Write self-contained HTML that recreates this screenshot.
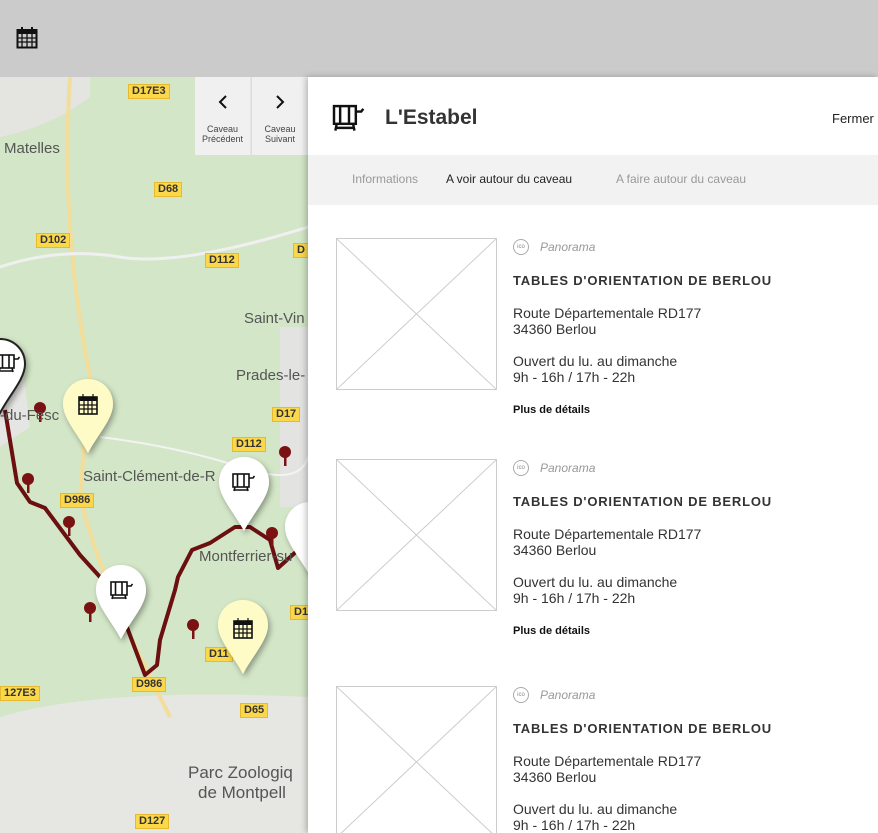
<!DOCTYPE html>
<html><head><meta charset="utf-8"><style>
*{margin:0;padding:0;box-sizing:border-box}
html,body{width:878px;height:833px;overflow:hidden}
body{font-family:"Liberation Sans",sans-serif;position:relative;background:#d5e7c9}
.top{position:absolute;left:0;top:0;width:878px;height:77px;background:#cbcbcb}
.map{position:absolute;left:0;top:77px;width:308px;height:756px;overflow:hidden;background:#d3e6c7}
.lbl{position:absolute;font-size:15px;color:#555}
.rd{position:absolute;background:#fbd84a;border:1px solid #e6b92e;font-size:11px;color:#333;padding:0 3px;line-height:13px;font-weight:bold}
.nav{position:absolute;top:77px;height:78px;width:56px;background:#f0f0f0;text-align:center;font-size:9px;color:#444;line-height:10px}
.panel{position:absolute;left:308px;top:77px;width:570px;height:756px;background:#fff;box-shadow:-2px 0 6px rgba(0,0,0,.25);overflow:hidden}
.tabs{position:absolute;left:0;top:78px;width:570px;height:50px;background:#f2f2f2;font-size:12px}
.tabs span{position:absolute;top:17px;color:#999}
.card{position:absolute;left:28px;width:520px;height:160px}
.img{position:absolute;left:0;top:0;width:161px;height:152px;border:1px solid #ccc}
.txt{position:absolute;left:177px;top:0;color:#333;font-size:14px}
.t{position:absolute;top:35px;font-weight:bold;font-size:13px;letter-spacing:.8px;white-space:nowrap}
</style></head><body>
<div class="top"></div>
<svg style="position:absolute;left:16px;top:26px" width="22" height="23" viewBox="0 0 22 23"><rect x="1.5" y="4" width="19" height="17.5" fill="none" stroke="#111" stroke-width="2"/><rect x="1.5" y="4" width="19" height="4" fill="#111"/><rect x="5" y="1" width="2" height="5" fill="#111"/><rect x="15" y="1" width="2" height="5" fill="#111"/><path d="M6 8v13M11 8v13M16 8v13M2 12h18M2 16h18" stroke="#111" stroke-width="1.3"/></svg>
<div class="map">
<svg width="308" height="756" style="position:absolute;left:0;top:0">
<path d="M0 0h90v20q-40 30-90 40z" fill="#e4e4e0"/>
<path d="M0 270h20l10 80-30 20z" fill="#e5e5e3"/>
<path d="M0 640q100-30 308-20v136H0z" fill="#e6e6e2"/>
<path d="M280 250h28v180h-28z" fill="#e3e3e1"/>
<path d="M70 0 Q60 150 90 300 L80 420 Q100 500 150 600 L170 640" stroke="#f3dd9a" stroke-width="4" fill="none"/>
<path d="M0 190 Q60 170 120 180 T308 150" stroke="#f0f0f0" stroke-width="3" fill="none"/>
<path d="M100 360 Q180 370 240 390 T308 380" stroke="#f3f3f3" stroke-width="2" fill="none"/>
<path d="M5 333 L17 406 L30 425 L45 431 L80 478 L100 500 L125 545 L145 598 L157 588 L160 563 L175 513 L178 500 L192 473 L210 466 L235 450 L250 450 L270 463 L278 491 L298 473 L308 471" stroke="#6b0f10" stroke-width="4" fill="none" stroke-linejoin="round"/>
<g fill="#7a1214"><circle cx="40" cy="331" r="6"/><rect x="39" y="335" width="2.5" height="10"/><circle cx="28" cy="402" r="6"/><rect x="27" y="406" width="2.5" height="10"/><circle cx="69" cy="445" r="6"/><rect x="68" y="449" width="2.5" height="10"/><circle cx="90" cy="531" r="6"/><rect x="89" y="535" width="2.5" height="10"/><circle cx="193" cy="548" r="6"/><rect x="192" y="552" width="2.5" height="10"/><circle cx="285" cy="375" r="6"/><rect x="284" y="379" width="2.5" height="10"/><circle cx="272" cy="456" r="6"/><rect x="271" y="460" width="2.5" height="10"/></g>
</svg>
<div class="lbl" style="left:4px;top:63px">Matelles</div>
<div class="lbl" style="left:244px;top:233px">Saint-Vin</div>
<div class="lbl" style="left:236px;top:290px">Prades-le-</div>
<div class="lbl" style="left:0px;top:330px">-du-Fesc</div>
<div class="lbl" style="left:83px;top:391px">Saint-Clément-de-R</div>
<div class="lbl" style="left:199px;top:471px">Montferrier-su</div>
<div class="lbl" style="left:188px;top:686px;font-size:17px">Parc Zoologiq</div>
<div class="lbl" style="left:198px;top:706px;font-size:17px">de Montpell</div>
<div class="rd" style="left:128px;top:7px">D17E3</div>
<div class="rd" style="left:154px;top:105px">D68</div>
<div class="rd" style="left:36px;top:156px">D102</div>
<div class="rd" style="left:205px;top:176px">D112</div>
<div class="rd" style="left:293px;top:166px">D</div>
<div class="rd" style="left:272px;top:330px">D17</div>
<div class="rd" style="left:232px;top:360px">D112</div>
<div class="rd" style="left:60px;top:416px">D986</div>
<div class="rd" style="left:205px;top:570px">D11</div>
<div class="rd" style="left:132px;top:600px">D986</div>
<div class="rd" style="left:0px;top:609px">127E3</div>
<div class="rd" style="left:240px;top:626px">D65</div>
<div class="rd" style="left:135px;top:737px">D127</div>
<div class="rd" style="left:290px;top:528px">D1</div>
<svg width="308" height="756" style="position:absolute;left:0;top:0">
<defs><filter id="s"><feDropShadow dx="2" dy="3" stdDeviation="3" flood-opacity=".35"/></filter>
<g id="pin"><path d="M0 0C-14 0-25 11-25 25C-25 40-10 55 0 74C10 55 25 40 25 25C25 11 14 0 0 0Z"/></g>
<g id="bar" fill="none" stroke="#111" stroke-width="1.6"><rect x="-10" y="-7" width="16" height="13"/><path d="M-5.5-7v13M1-7v13M-8 6l-1 4M4 6l1 4M-8 9h12M6-3h4l1.5-2"/></g>
<g id="cal"><rect x="-9" y="-8" width="18" height="17" fill="none" stroke="#111" stroke-width="1.6"/><rect x="-9" y="-8" width="18" height="4" fill="#111"/><path d="M-4-4v13M0-4v13M4-4v13M-9 0h18M-9 4h18M-5-11v4M5-11v4" stroke="#111" stroke-width="1.2"/></g></defs>
<g filter="url(#s)" fill="#fff"><use href="#pin" x="0" y="262" stroke="#222" stroke-width="2"/><use href="#pin" x="244" y="380"/><use href="#pin" x="121" y="488"/><use href="#pin" x="310" y="425"/></g>
<g filter="url(#s)" fill="#fefbc6"><use href="#pin" x="88" y="302"/><use href="#pin" x="243" y="523"/></g>
<use href="#bar" x="8" y="285"/><use href="#bar" x="243" y="404"/><use href="#bar" x="121" y="512"/>
<use href="#cal" x="88" y="328"/><use href="#cal" x="243" y="552"/>
</svg>
</div>
<div class="nav" style="left:195px;border-right:1px solid #e5e5e5"><svg width="12" height="16" style="margin-top:17px;margin-bottom:12px" viewBox="0 0 12 16"><path d="M9 2L3 8l6 6" stroke="#111" stroke-width="2" fill="none"/></svg><br>Caveau<br>Précédent</div>
<div class="nav" style="left:252px"><svg width="12" height="16" style="margin-top:17px;margin-bottom:12px" viewBox="0 0 12 16"><path d="M3 2l6 6-6 6" stroke="#111" stroke-width="2" fill="none"/></svg><br>Caveau<br>Suivant</div>
<div class="panel">
<svg style="position:absolute;left:22px;top:25px" width="38" height="30" viewBox="-12 -10 26 22"><g fill="none" stroke="#111" stroke-width="1.8"><rect x="-10" y="-7" width="16" height="13"/><path d="M-5.5-7v13M1-7v13M-8 6l-1 5M4 6l1 5M-8 9h12M6-3h4l1.5-2"/></g></svg>
<div style="position:absolute;left:77px;top:29px;font-size:21px;font-weight:bold;color:#333">L'Estabel</div>
<div style="position:absolute;left:524px;top:34px;font-size:13px;color:#222">Fermer</div>
<div class="tabs"><span style="left:44px">Informations</span><span style="left:138px;color:#222">A voir autour du caveau</span><span style="left:308px">A faire autour du caveau</span></div>
<div class="card" style="top:161px"><svg class="img" viewBox="0 0 161 152" preserveAspectRatio="none"><path d="M0 0L161 152M161 0L0 152" stroke="#ccc"/></svg><div class="txt"><div style="position:absolute;top:1px;left:0;width:16px;height:16px;border:1px solid #aaa;border-radius:50%;font-size:6px;line-height:14px;text-align:center;color:#888">ico</div><div style="position:absolute;left:27px;top:2px;font-size:12px;font-style:italic;color:#999;white-space:nowrap">Panorama</div><div class="t">TABLES D'ORIENTATION DE BERLOU</div><div style="position:absolute;top:67px;line-height:16px;white-space:nowrap">Route Départementale RD177<br>34360 Berlou</div><div style="position:absolute;top:115px;line-height:16px;white-space:nowrap">Ouvert du lu. au dimanche<br>9h - 16h / 17h - 22h</div><div style="position:absolute;top:166px;font-size:11px;font-weight:bold;color:#111;white-space:nowrap">Plus de détails</div></div></div>
<div class="card" style="top:382px"><svg class="img" viewBox="0 0 161 152" preserveAspectRatio="none"><path d="M0 0L161 152M161 0L0 152" stroke="#ccc"/></svg><div class="txt"><div style="position:absolute;top:1px;left:0;width:16px;height:16px;border:1px solid #aaa;border-radius:50%;font-size:6px;line-height:14px;text-align:center;color:#888">ico</div><div style="position:absolute;left:27px;top:2px;font-size:12px;font-style:italic;color:#999;white-space:nowrap">Panorama</div><div class="t">TABLES D'ORIENTATION DE BERLOU</div><div style="position:absolute;top:67px;line-height:16px;white-space:nowrap">Route Départementale RD177<br>34360 Berlou</div><div style="position:absolute;top:115px;line-height:16px;white-space:nowrap">Ouvert du lu. au dimanche<br>9h - 16h / 17h - 22h</div><div style="position:absolute;top:166px;font-size:11px;font-weight:bold;color:#111;white-space:nowrap">Plus de détails</div></div></div>
<div class="card" style="top:609px"><svg class="img" viewBox="0 0 161 152" preserveAspectRatio="none"><path d="M0 0L161 152M161 0L0 152" stroke="#ccc"/></svg><div class="txt"><div style="position:absolute;top:1px;left:0;width:16px;height:16px;border:1px solid #aaa;border-radius:50%;font-size:6px;line-height:14px;text-align:center;color:#888">ico</div><div style="position:absolute;left:27px;top:2px;font-size:12px;font-style:italic;color:#999;white-space:nowrap">Panorama</div><div class="t">TABLES D'ORIENTATION DE BERLOU</div><div style="position:absolute;top:67px;line-height:16px;white-space:nowrap">Route Départementale RD177<br>34360 Berlou</div><div style="position:absolute;top:115px;line-height:16px;white-space:nowrap">Ouvert du lu. au dimanche<br>9h - 16h / 17h - 22h</div></div></div>
</div>
</body></html>
